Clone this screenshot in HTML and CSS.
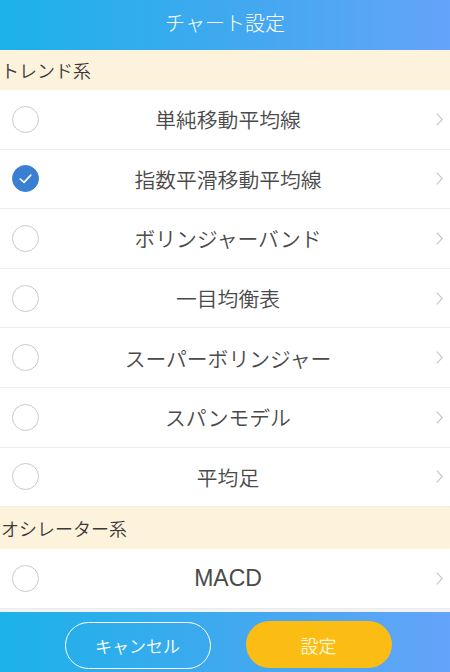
FILE: index.html
```html
<!DOCTYPE html>
<html lang="ja">
<head>
<meta charset="utf-8">
<link rel="stylesheet" href="styles.css">
</head>
<body>
<div class="app">
  <header class="topbar">チャート設定</header>
  <main class="list">
    <div class="section">トレンド系</div>
    <div class="row"><span class="radio"></span><span class="label">単純移動平均線</span><svg class="chev" viewBox="0 0 10 16"><polyline points="2,1.5 8,8 2,14.5"/></svg></div>
    <div class="row"><span class="radio checked"><svg viewBox="0 0 28 28"><polyline points="8.5,14.5 12.5,18 19.5,10.5"/></svg></span><span class="label">指数平滑移動平均線</span><svg class="chev" viewBox="0 0 10 16"><polyline points="2,1.5 8,8 2,14.5"/></svg></div>
    <div class="row"><span class="radio"></span><span class="label">ボリンジャーバンド</span><svg class="chev" viewBox="0 0 10 16"><polyline points="2,1.5 8,8 2,14.5"/></svg></div>
    <div class="row"><span class="radio"></span><span class="label">一目均衡表</span><svg class="chev" viewBox="0 0 10 16"><polyline points="2,1.5 8,8 2,14.5"/></svg></div>
    <div class="row"><span class="radio"></span><span class="label">スーパーボリンジャー</span><svg class="chev" viewBox="0 0 10 16"><polyline points="2,1.5 8,8 2,14.5"/></svg></div>
    <div class="row"><span class="radio"></span><span class="label">スパンモデル</span><svg class="chev" viewBox="0 0 10 16"><polyline points="2,1.5 8,8 2,14.5"/></svg></div>
    <div class="row"><span class="radio"></span><span class="label">平均足</span><svg class="chev" viewBox="0 0 10 16"><polyline points="2,1.5 8,8 2,14.5"/></svg></div>
    <div class="section section2">オシレーター系</div>
    <div class="row"><span class="radio"></span><span class="label latin">MACD</span><svg class="chev" viewBox="0 0 10 16"><polyline points="2,1.5 8,8 2,14.5"/></svg></div>
  </main>
  <footer class="bottombar">
    <button class="btn cancel">キャンセル</button>
    <button class="btn ok">設定</button>
  </footer>
</div>
</body>
</html>
```

FILE: styles.css
```css
* { box-sizing: border-box; }
html, body { margin: 0; padding: 0; }
body {
  background: #f3f3f3;
  font-family: "Noto Sans CJK JP", "Noto Sans", sans-serif;
  width: 450px;
  height: 672px;
  overflow: hidden;
}
.app {
  display: flex;
  flex-direction: column;
  height: 672px;
}
.topbar {
  height: 50px;
  display: flex;
  align-items: center;
  justify-content: center;
  color: #fff;
  font-size: 20px;
  font-weight: 300;
  padding-bottom: 5px;
  background: linear-gradient(90deg, #1cb2ea 0%, #3fa9ee 50%, #64a4fa 100%);
}
.list {
  flex: 1;
  overflow: hidden;
}
.section {
  height: 40px;
  background: #fdf3dd;
  color: #3a3a3a;
  font-size: 18px;
  font-weight: 350;
  display: flex;
  align-items: center;
  padding-left: 1px;
}
.section2 {
  height: 42px;
}
.row {
  height: 59.6px;
  background: #fff;
  border-bottom: 1px solid #ececec;
  display: grid;
  grid-template-columns: 52px 1fr 46px;
  align-items: center;
}
.radio {
  width: 27px;
  height: 27px;
  margin-left: 12px;
  border-radius: 50%;
  border: 1px solid #c9c9c9;
  display: block;
}
.radio.checked {
  background: #3a80d2;
  border-color: #3a80d2;
}
.radio svg {
  width: 27px;
  height: 27px;
  display: block;
  margin: -1px;
  fill: none;
  stroke: #fff;
  stroke-width: 1.6;
  stroke-linecap: round;
  stroke-linejoin: round;
}
.label {
  text-align: center;
  font-size: 20.8px;
  font-weight: 350;
  color: #4a4a4a;
}
.label.latin {
  font-family: "Liberation Sans", "Noto Sans CJK JP", sans-serif;
  font-weight: 400;
  font-size: 23px;
  color: #4a4a4a;
}
.chev {
  width: 9px;
  height: 15px;
  justify-self: end;
  margin-right: 6px;
  fill: none;
  stroke: #c6c6c6;
  stroke-width: 1.3;
}
.bottombar {
  height: 60px;
  flex: none;
  display: flex;
  justify-content: center;
  align-items: flex-start;
  gap: 35px;
  padding-top: 10px;
  padding-left: 6px;
  background: linear-gradient(90deg, #1cb2ea 0%, #3fa9ee 50%, #64a4fa 100%);
}
.btn {
  width: 146px;
  height: 47px;
  border-radius: 24px;
  font-family: "Noto Sans CJK JP", sans-serif;
  font-size: 17px;
  font-weight: 350;
  color: #fff;
  padding: 0;
}
.cancel {
  background: transparent;
  border: 1.5px solid #fff;
}
.ok {
  background: #fbbd14;
  border: none;
  color: #fff6d6;
  font-size: 18px;
  margin-top: -1px;
}
```
